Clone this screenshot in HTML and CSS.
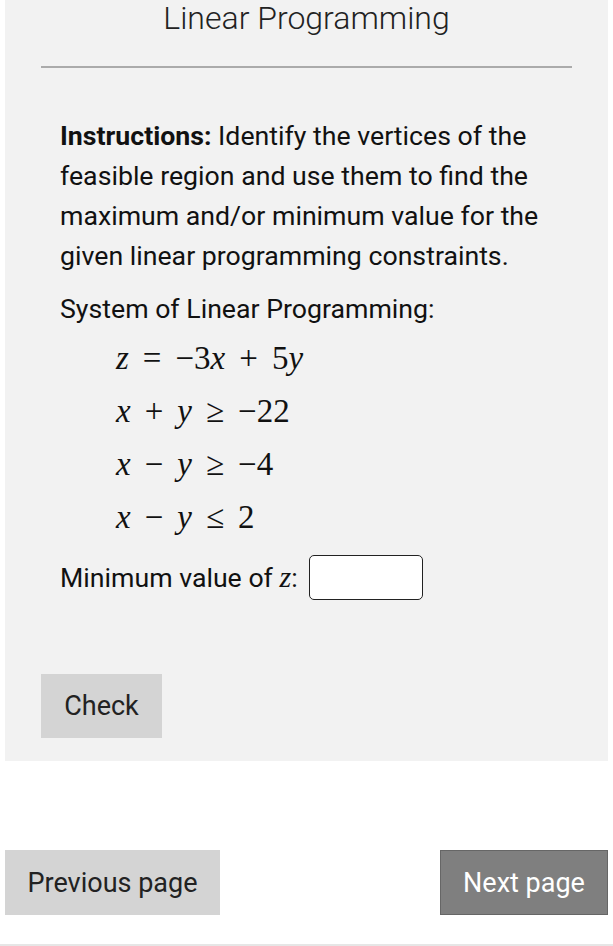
FILE: index.html
```html
<!DOCTYPE html>
<html lang="en">
<head>
    <meta charset="UTF-8">
    <meta name="viewport" content="width=device-width, initial-scale=1.0">
    <title>Linear Programming</title>
    <link rel="stylesheet" href="styles.css">
</head>
<body>
    <div class="page">
        <div class="panel">
            <h1 class="title">Linear Programming</h1>
            <hr class="divider">

            <div class="question">
                <p class="instructions"><b>Instructions:</b> Identify the vertices of the feasible region and use them to find the maximum and/or minimum value for the given linear programming constraints.</p>
                <p class="system-label">System of Linear Programming:</p>

                <div class="equations">
                    <div class="eq"><i>z</i><span class="op">=</span>&minus;3<i>x</i><span class="op">+</span>5<i>y</i></div>
                    <div class="eq"><i>x</i><span class="op">+</span><i>y</i><span class="op">&ge;</span>&minus;22</div>
                    <div class="eq"><i>x</i><span class="op">&minus;</span><i>y</i><span class="op">&ge;</span>&minus;4</div>
                    <div class="eq"><i>x</i><span class="op">&minus;</span><i>y</i><span class="op">&le;</span>2</div>
                </div>

                <div class="answer-row">
                    <span>Minimum value of <i class="var">z</i>:</span>
                    <input type="text" class="answer">
                </div>
            </div>

            <button class="check-btn">Check</button>
        </div>

        <div class="nav">
            <button class="nav-btn prev">Previous page</button>
            <button class="nav-btn next">Next page</button>
        </div>
    </div>
</body>
</html>
```

FILE: styles.css
```css
body {
    margin: 0;
    font-family: Roboto, "Noto Sans", sans-serif;
    background-color: #fff;
    color: #111;
}

.page {
    padding: 0 5px;
    border-bottom: 2px solid #e6e6e6;
    height: 946px;
    box-sizing: border-box;
}

.panel {
    background-color: #f2f2f2;
    padding: 0 36px 22px;
    height: 761px;
    box-sizing: border-box;
}

.title {
    margin: 0;
    font-size: 32px;
    font-weight: 300;
    line-height: 36px;
    text-align: center;
    color: #222;
}

.divider {
    margin: 30px 0 0;
    border: none;
    border-top: 2px solid #ababab;
}

.question {
    padding: 48px 19px 0;
    font-size: 26.7px;
}

.instructions {
    margin: 0;
    line-height: 40px;
}

.system-label {
    margin: 13px 0 0;
    line-height: 40px;
}

.equations {
    padding-left: 56px;
    margin-top: 3px;
    font-family: "Liberation Serif", "Times New Roman", serif;
    font-size: 33px;
}

.eq {
    line-height: 53px;
}

.eq i {
    font-style: italic;
}

.op {
    margin: 0 14px;
}

.answer-row {
    display: flex;
    align-items: center;
    margin-top: 11px;
    line-height: 40px;
}

.var {
    font-family: "Liberation Serif", serif;
    font-size: 30px;
}

.answer {
    width: 114px;
    height: 45px;
    box-sizing: border-box;
    margin-left: 11px;
    border: 1.5px solid #222;
    border-radius: 5px;
    background-color: #fff;
}

.check-btn {
    display: block;
    margin-top: 74px;
    width: 121px;
    height: 64px;
    border: none;
    background-color: #d4d4d4;
    font-family: Roboto, sans-serif;
    font-size: 27px;
    color: #222;
}

.nav {
    display: flex;
    justify-content: space-between;
    margin-top: 89px;
}

.nav-btn {
    height: 65px;
    font-family: Roboto, sans-serif;
    font-size: 27px;
    border: none;
}

.prev {
    width: 215px;
    background-color: #d4d4d4;
    color: #222;
}

.next {
    width: 168px;
    background-color: #7f7f7f;
    border: 1px solid #666;
    color: #fff;
}
```
